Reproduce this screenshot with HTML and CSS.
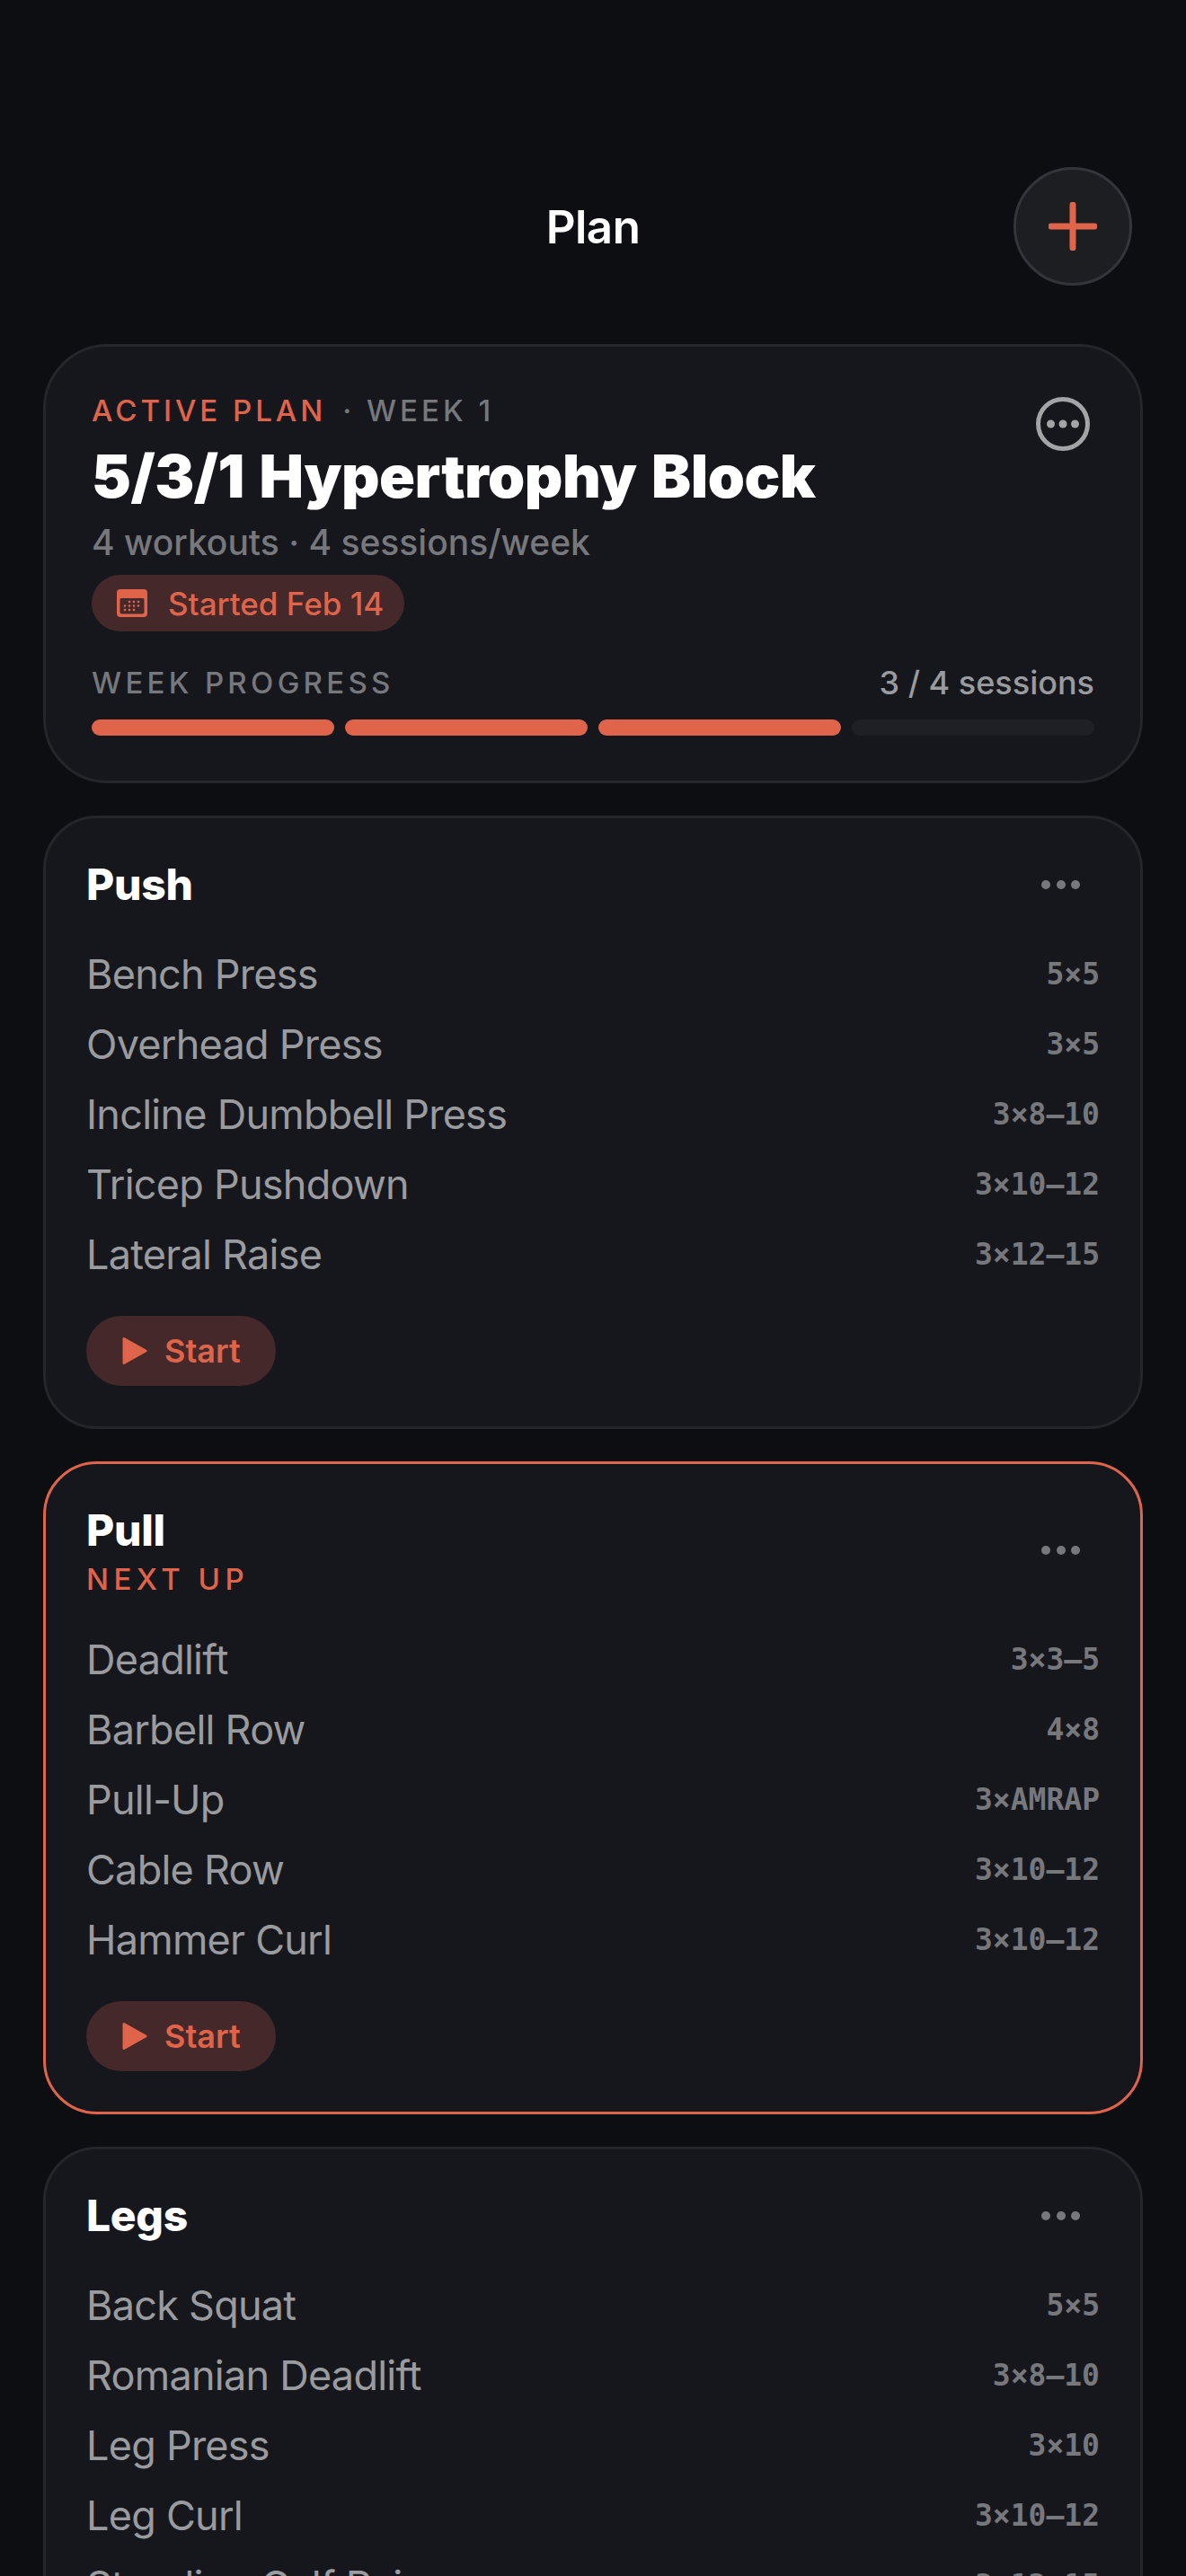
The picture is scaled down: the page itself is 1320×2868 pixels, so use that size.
FILE: index.html
```html
<!DOCTYPE html>
<html lang="en">
<head>
    <meta charset="UTF-8">
    <meta name="viewport" content="width=device-width, initial-scale=1.0">
    <title>Plan</title>
    <link rel="stylesheet" href="styles.css">
</head>
<body>
    <div class="screen">
        <header class="topBar">
            <h1 class="pageTitle">Plan</h1>
            <button class="addBtn" aria-label="Add">
                <svg width="54" height="54" viewBox="0 0 54 54"><path d="M27 3V51M3 27H51" stroke="#e0644a" stroke-width="7" stroke-linecap="round" fill="none"/></svg>
            </button>
        </header>

        <section class="hero">
            <div class="heroTop">
                <div class="heroText">
                    <div class="eyebrow"><span class="accent">ACTIVE PLAN</span><span class="weekTag">· WEEK 1</span></div>
                    <h2 class="heroName">5/3/1 Hypertrophy Block</h2>
                    <div class="heroMeta">4 workouts · 4 sessions/week</div>
                </div>
                <svg class="moreCircle" width="60" height="60" viewBox="0 0 60 60"><circle cx="30" cy="30" r="27.5" fill="none" stroke="#a3a4a6" stroke-width="5"/><circle cx="16.500" cy="30" r="4.500" fill="#a3a4a6"/><circle cx="30" cy="30" r="4.500" fill="#a3a4a6"/><circle cx="43.500" cy="30" r="4.500" fill="#a3a4a6"/></svg>
            </div>
            <div class="chip">
                <svg width="34" height="31" viewBox="0 0 34 31"><path fill-rule="evenodd" fill="#e0644a" d="M4 0H30A4 4 0 0 1 34 4V27A4 4 0 0 1 30 31H4A4 4 0 0 1 0 27V4A4 4 0 0 1 4 0ZM5 10A1.500 1.500 0 0 0 3.500 11.500V25.500A2 2 0 0 0 5.500 27.500H28.500A2 2 0 0 0 30.500 25.500V11.500A1.500 1.500 0 0 0 29 10Z"/><g fill="#e0644a"><circle cx="14" cy="14" r="1.300"/><circle cx="19" cy="14" r="1.300"/><circle cx="24" cy="14" r="1.300"/><circle cx="9" cy="18.500" r="1.300"/><circle cx="14" cy="18.500" r="1.300"/><circle cx="19" cy="18.500" r="1.300"/><circle cx="24" cy="18.500" r="1.300"/><circle cx="9" cy="23" r="1.300"/><circle cx="14" cy="23" r="1.300"/><circle cx="19" cy="23" r="1.300"/></g></svg>
                Started Feb 14
            </div>
            <div class="progressHead">
                <span class="progressLabel">WEEK PROGRESS</span>
                <span class="progressCount">3 / 4 sessions</span>
            </div>
            <div class="progressBars">
                <div class="seg on"></div>
                <div class="seg on"></div>
                <div class="seg on"></div>
                <div class="seg"></div>
            </div>
        </section>

        <section class="card">
            <div class="cardHead">
                <div><h3 class="cardName">Push</h3></div>
                <div class="dots"><i></i><i></i><i></i></div>
            </div>
            <ul class="rows">
                <li><span>Bench Press</span><b>5×5</b></li>
                <li><span>Overhead Press</span><b>3×5</b></li>
                <li><span>Incline Dumbbell Press</span><b>3×8–10</b></li>
                <li><span>Tricep Pushdown</span><b>3×10–12</b></li>
                <li><span>Lateral Raise</span><b>3×12–15</b></li>
            </ul>
            <button class="startBtn">
                <svg width="28" height="32" viewBox="0 0 28 32"><path d="M2 2.500V29.500L26 16Z" fill="#e0644a" stroke="#e0644a" stroke-width="3" stroke-linejoin="round"/></svg>
                Start
            </button>
        </section>

        <section class="card next">
            <div class="cardHead">
                <div>
                    <h3 class="cardName">Pull</h3>
                    <div class="nextTag">NEXT UP</div>
                </div>
                <div class="dots"><i></i><i></i><i></i></div>
            </div>
            <ul class="rows">
                <li><span>Deadlift</span><b>3×3–5</b></li>
                <li><span>Barbell Row</span><b>4×8</b></li>
                <li><span>Pull-Up</span><b>3×AMRAP</b></li>
                <li><span>Cable Row</span><b>3×10–12</b></li>
                <li><span>Hammer Curl</span><b>3×10–12</b></li>
            </ul>
            <button class="startBtn">
                <svg width="28" height="32" viewBox="0 0 28 32"><path d="M2 2.500V29.500L26 16Z" fill="#e0644a" stroke="#e0644a" stroke-width="3" stroke-linejoin="round"/></svg>
                Start
            </button>
        </section>

        <section class="card">
            <div class="cardHead">
                <div><h3 class="cardName">Legs</h3></div>
                <div class="dots"><i></i><i></i><i></i></div>
            </div>
            <ul class="rows">
                <li><span>Back Squat</span><b>5×5</b></li>
                <li><span>Romanian Deadlift</span><b>3×8–10</b></li>
                <li><span>Leg Press</span><b>3×10</b></li>
                <li><span>Leg Curl</span><b>3×10–12</b></li>
                <li><span>Standing Calf Raise</span><b>3×12–15</b></li>
            </ul>
        </section>
    </div>
</body>
</html>
```

FILE: styles.css
```css
*{padding: 0; margin: 0; box-sizing: border-box;}
ul{list-style: none;}
html, body{height: 2868px; overflow: hidden;}
body{
    background-color: #0d0e12;
    font-family: Inter, "Liberation Sans", sans-serif;
    color: #fff;
}
button{border: none; font-family: inherit; cursor: pointer;}

.screen{
    padding: 186px 48px 0;
    display: flex;
    flex-direction: column;
    gap: 36px;
}

/* header */
.topBar{
    position: relative;
    height: 132px;
    margin-bottom: 29px;
    display: flex;
    align-items: center;
    justify-content: center;
}
.pageTitle{
    font-size: 51px;
    font-weight: 600;
    letter-spacing: -0.5px;
}
.addBtn{
    position: absolute;
    right: 12px;
    top: 0;
    width: 132px;
    height: 132px;
    border-radius: 50%;
    background-color: #1d1e22;
    border: 3px solid #33353a;
    display: flex;
    align-items: center;
    justify-content: center;
}

/* active plan */
.hero{
    height: 489px;
    padding: 51px;
    padding-bottom: 50px;
    background-color: #16171c;
    border: 3px solid #25262b;
    border-radius: 72px;
}
.heroTop{
    display: flex;
    justify-content: space-between;
    align-items: flex-start;
}
.eyebrow{
    height: 40px;
    line-height: 40px;
    font-size: 33px;
    font-weight: 500;
    letter-spacing: 4px;
}
.accent{color: #e0644a;}
.weekTag{
    margin-left: 18px;
    color: #77787c;
    font-weight: 500;
}
.heroName{
    margin-top: 13px;
    font-size: 66px;
    line-height: 80px;
    font-weight: 900;
    letter-spacing: -0.5px;
    word-spacing: 4px;
}
.heroMeta{
    margin-top: 10px;
    font-size: 39px;
    line-height: 48px;
    font-weight: 500;
    color: #77787c;
}
.moreCircle{
    margin-top: 5px;
    margin-right: 5px;
}
.chip{
    margin-top: 12px;
    width: 348px;
    height: 63px;
    padding-left: 28px;
    display: flex;
    align-items: center;
    gap: 23px;
    background-color: #44282a;
    border-radius: 32px;
    color: #e0644a;
    font-size: 35px;
    font-weight: 500;
}
.progressHead{
    margin-top: 36px;
    height: 42px;
    display: flex;
    justify-content: space-between;
    align-items: center;
}
.progressLabel{
    font-size: 33px;
    font-weight: 500;
    letter-spacing: 4.300px;
    color: #77787c;
}
.progressCount{
    font-size: 36px;
    font-weight: 500;
    color: #9a9b9f;
}
.progressBars{
    margin-top: 20px;
    display: flex;
    gap: 12px;
}
.seg{
    flex: 1;
    height: 18px;
    border-radius: 9px;
    background-color: #1f2025;
}
.seg.on{background-color: #e0644a;}

/* workout cards */
.card{
    padding: 45px;
    background-color: #16171c;
    border: 3px solid #25262b;
    border-radius: 60px;
}
.card.next{border-color: #e0644a;}
.cardHead{
    display: flex;
    justify-content: space-between;
    align-items: center;
    margin-bottom: 31px;
}
.cardName{
    font-size: 48px;
    line-height: 58px;
    font-weight: 800;
    letter-spacing: -0.3px;
}
.nextTag{
    margin-top: 6px;
    height: 38px;
    line-height: 38px;
    font-size: 33px;
    font-weight: 500;
    letter-spacing: 5.500px;
    color: #e0644a;
}
.dots{
    display: flex;
    gap: 6.500px;
    margin-right: 22px;
}
.dots i{
    width: 10px;
    height: 10px;
    border-radius: 50%;
    background-color: #77787c;
}
.rows li{
    height: 78px;
    display: flex;
    justify-content: space-between;
    align-items: center;
}
.rows span{
    font-size: 45px;
    letter-spacing: -0.750px;
    color: #9a9b9f;
}
.rows b{
    font-family: "DejaVu Sans Mono", "Liberation Mono", monospace;
    font-size: 33px;
    font-weight: 700;
    color: #77787c;
}
.startBtn{
    margin-top: 30px;
    width: 211px;
    height: 78px;
    padding-left: 40px;
    display: flex;
    align-items: center;
    gap: 19px;
    border-radius: 39px;
    background-color: #44282a;
    color: #e0644a;
    font-size: 36px;
    font-weight: 600;
}
```
